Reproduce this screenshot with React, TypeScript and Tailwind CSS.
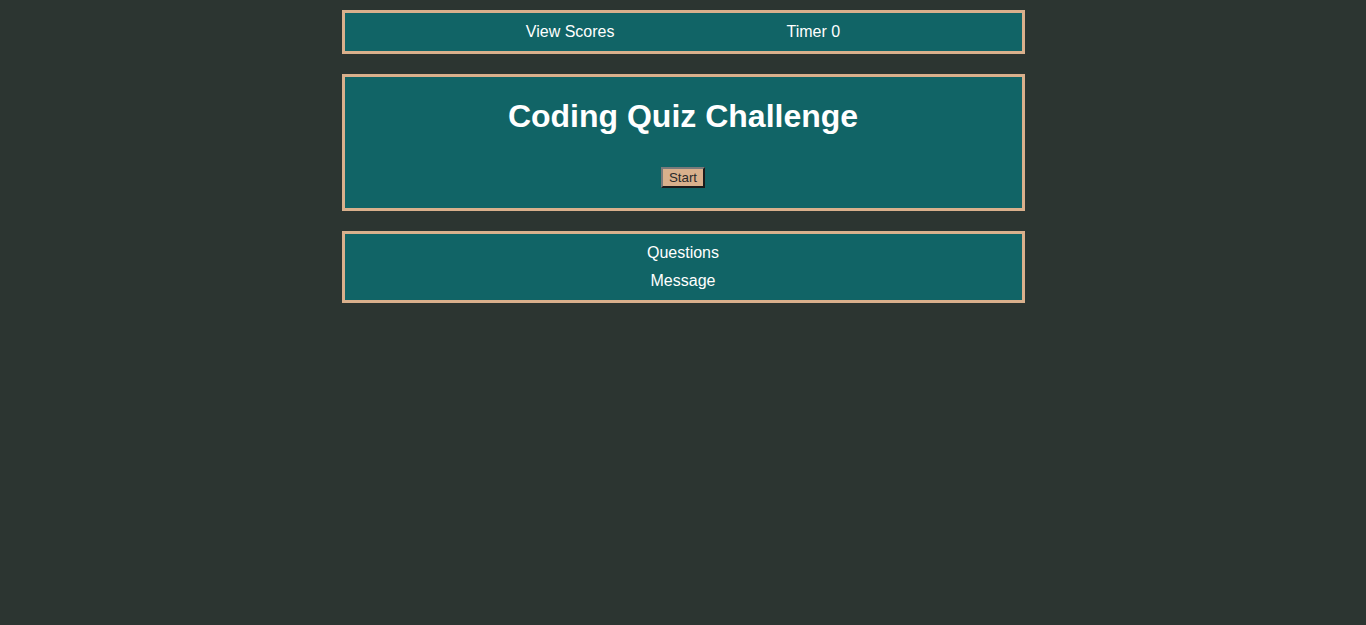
export default function App() {
  return (
    <div className="min-h-[625px] w-full bg-[#2C3531] pt-[10px] text-white" style={{ fontFamily: '"Liberation Sans", Arial, sans-serif' }}>
      <div className="mx-auto flex w-1/2 flex-col gap-[20px]">
        <nav className="flex h-[44px] items-center justify-center gap-[172px] border-[3px] border-[#D9B08C] bg-[#116466] text-[16px]">
          <span>View Scores</span>
          <span>Timer 0</span>
        </nav>
        <section className="flex h-[137px] flex-col items-center border-[3px] border-[#D9B08C] bg-[#116466] pt-[21px]">
          <h1 className="text-[32px] font-bold leading-[37px]">Coding Quiz Challenge</h1>
          <button className="mt-[32px] h-[21px] border-2 border-t-[#7a7a7a] border-l-[#7a7a7a] border-b-[#1b1b1b] border-r-[#1b1b1b] bg-[#D9B08C] px-[6px] text-[13.33px] leading-[15px] text-[#2a2a2a]">
            Start
          </button>
        </section>
        <section className="flex h-[72px] flex-col items-center gap-[10px] border-[3px] border-[#D9B08C] bg-[#116466] pt-[10px] text-[16px] leading-[18px]">
          <p>Questions</p>
          <p>Message</p>
        </section>
      </div>
    </div>
  );
}
